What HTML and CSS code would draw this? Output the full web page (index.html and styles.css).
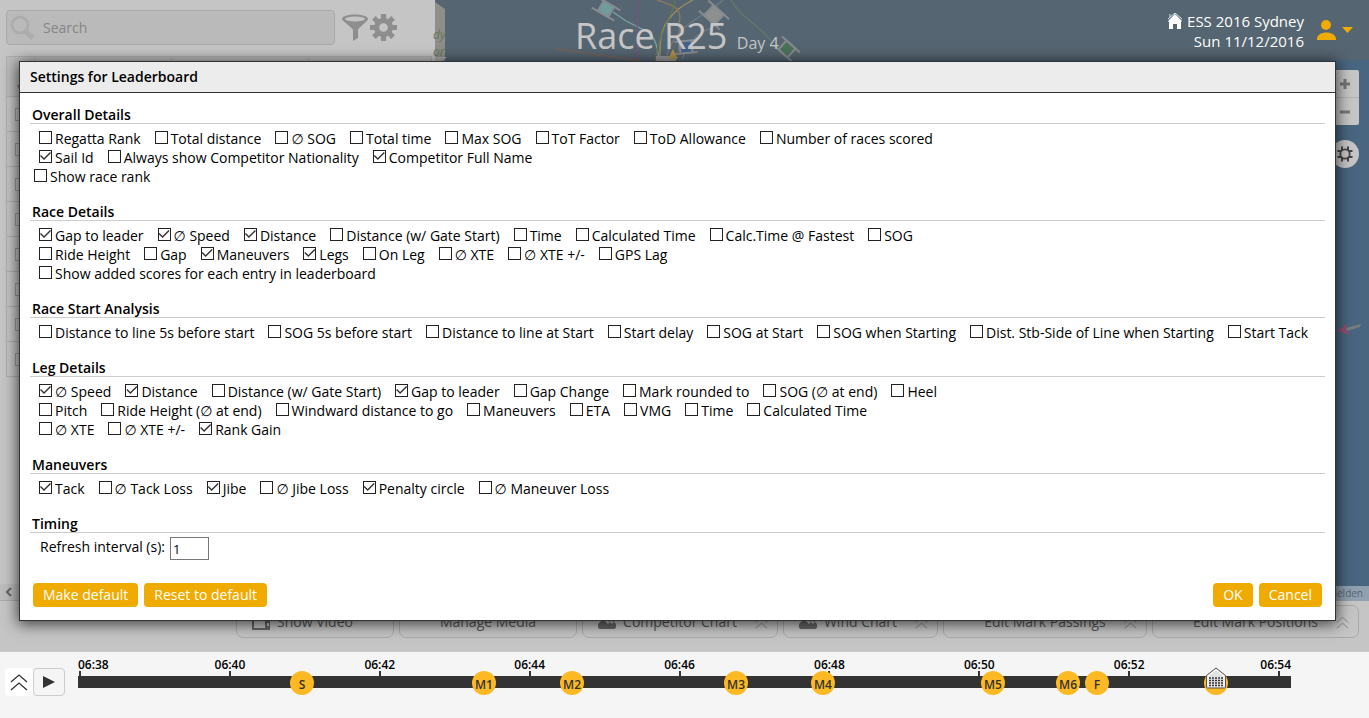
FILE: index.html
```html
<!DOCTYPE html>
<html lang="en">
<head>
<meta charset="utf-8">
<title>Race R25</title>
<link rel="stylesheet" href="styles.css">
</head>
<body>
<svg class="defs" aria-hidden="true">
  <symbol id="gear" viewBox="0 0 26 26"><path fill-rule="evenodd" d="M10.500 0h5v4.200l2 .8 3-3 3.500 3.500-3 3 .8 2h4.200v5h-4.200l-.8 2 3 3-3.500 3.500-3-3-2 .8v4.200h-5v-4.200l-2-.8-3 3-3.500-3.500 3-3-.8-2H0v-5h4.200l.8-2-3-3 3.500-3.500 3 3 2-.8zM13 8.800a4.200 4.200 0 1 0 0 8.400 4.200 4.200 0 0 0 0-8.400z"/></symbol>
  <symbol id="up" viewBox="0 0 18 18"><path d="M1 9l8-7 8 7M1 17l8-7 8 7" fill="none" stroke="currentColor" stroke-width="1.300"/></symbol>
  <symbol id="chart" viewBox="0 0 18 15"><path d="M0 12V9l4-4 3 1 3 3 2-2 2 2 2-2 2 2v3q0 2-2 2H2q-2 0-2-2zM8 4l3 3 2-2 2 2 3-2V3q0-2-2-2h-6z"/></symbol>
</svg>
<div class="workspace">
  <section class="panel">
    <div class="search">
      <label class="searchbox">
        <svg width="26" height="26" viewBox="0 0 26 26"><circle cx="10" cy="10" r="8" fill="none" stroke="currentColor" stroke-width="3"/><path d="M15 16l8 7" stroke="currentColor" stroke-width="5"/></svg>
        <input type="text" placeholder="Search" aria-label="Search">
      </label>
      <button class="icon" aria-label="Filter"><svg width="26" height="27" viewBox="0 0 26 27"><path d="M0 5c0-6 26-6 26 0 0 2-10 9-10 11v8l-5 3V16C11 14 0 7 0 5z"/><ellipse cx="13" cy="5" rx="10" ry="2.500" fill="#c5c5c5"/></svg></button>
      <button class="icon" aria-label="Settings"><svg width="27" height="27"><use href="#gear"/></svg></button>
    </div>
    <table class="entries" aria-label="Entries">
      <thead><tr><th class="pick">▾</th><th class="wide"></th><th class="wide"></th><th></th></tr></thead>
      <tbody>
        <tr><td><input type="checkbox" aria-label="Entry 1"></td><td></td><td></td><td></td></tr>
        <tr><td><input type="checkbox" aria-label="Entry 2"></td><td></td><td></td><td></td></tr>
        <tr><td><input type="checkbox" aria-label="Entry 3"></td><td></td><td></td><td></td></tr>
        <tr><td><input type="checkbox" aria-label="Entry 4"></td><td></td><td></td><td></td></tr>
        <tr><td><input type="checkbox" aria-label="Entry 5"></td><td></td><td></td><td></td></tr>
        <tr><td><input type="checkbox" aria-label="Entry 6"></td><td></td><td></td><td></td></tr>
        <tr><td><input type="checkbox" aria-label="Entry 7"></td><td></td><td></td><td></td></tr>
        <tr><td><input type="checkbox" aria-label="Entry 8"></td><td></td><td></td><td></td></tr>
      </tbody>
    </table>
    <div class="scrollbar"><svg width="7" height="10" viewBox="0 0 7 10"><path d="M6 1L2 5l4 4" fill="none" stroke="#666" stroke-width="2"/></svg></div>
  </section>
  <section class="map">
    <header class="racebar">
      <svg class="tracks" width="500" height="62" viewBox="0 0 500 62" fill="none">
        <path d="M0 2l10 7v53H0z" fill="#8e8f8a"/>
        <path d="M0 57l12 0-6 5H0z" fill="#adadad"/>
        <g stroke-width="1.300">
          <path d="M178 12l13 9 14 7c14 5 17 14 19 32" stroke="#77a5a6"/>
          <path d="M205 0c-4 20-4 40-1 60" stroke="#76557f"/>
          <path d="M258 0c-20 10-33 24-33 48v12" stroke="#a18f5c"/>
          <path d="M222 0c22 6 25 12 22 24v28" stroke="#8c7a5d"/>
          <path d="M288 0c-17 17-50 23-57 60M282 25c-18 8-27 12-35 35" stroke="#747a80"/>
          <path d="M296 0c10 18 29 25 42 43" stroke="#637b66"/>
          <path d="M121 49l87 12" stroke="#6f625f" stroke-width="2"/>
          <path d="M240 0c-3 20-16 30-20 62" stroke="#657650"/>
        </g>
        <g stroke="#858b90" stroke-width="2">
          <g transform="translate(171 9) rotate(30)"><path d="M-13-6h26M-13 6h26" /><path d="M-6-6H6V6H-6z" fill="#6f9c9d"/></g>
          <g transform="translate(279 15) rotate(42)"><path d="M-14-7h28M-14 7h28" /><path d="M-7-7H7V7H-7z" fill="#8e9090"/></g>
          <g transform="translate(352 49) rotate(42)"><path d="M-12-6h24M-12 6h24" /><path d="M-6-6H6V6H-6z" fill="#4b7158"/></g>
          <g transform="translate(251 47) rotate(-5)"><path d="M-11-6h22M-11 6h22" /><path d="M-6-6H6V6H-6z" fill="#41618e"/></g>
        </g>
        <path d="M221 56h20v5h-20z" fill="#969898"/><path d="M238 49l5 10h-10z" fill="#ae914d"/>
      </svg>
      <span class="park">dy<br>or</span>
      <h1 class="title">Race R25 <small>Day 4</small></h1>
      <div class="event">
        <svg width="14" height="16" viewBox="0 0 14 16"><path d="M0 8L7 1l7 7-1 1v7H9v-5H5v5H1V9z" fill="#fff"/><path d="M0 6l7-6 7 6M2 1v3" fill="none" stroke="#dce8ec"/></svg>
        <p>ESS 2016 Sydney<br>Sun 11/12/2016</p>
        <button class="user" aria-label="User menu"><svg width="36" height="20" viewBox="0 0 36 20"><circle cx="9" cy="5" r="5"/><path d="M0 20c-1-10 20-10 19 0zM25 7h11l-5.500 6z"/></svg></button>
      </div>
    </header>
    <div class="controls">
      <div class="zoom"><button aria-label="Zoom in"><svg width="12" height="12"><path d="M4.500 1h3v3.500H11v3H7.500V11h-3V7.500H1v-3h3.500z"/></svg></button><button aria-label="Zoom out"><svg width="12" height="12"><path d="M1 4.500h10v3H1z"/></svg></button></div>
      <button class="mapgear" aria-label="Map settings"><svg width="16" height="16" viewBox="-8 -8 16 16"><circle r="4.700" fill="none" stroke="#444" stroke-width="1.800"/><path d="M-3-7.500V-4M3-7.500V-4M-3 7.500V4M3 7.500V4M-7.500-3H-4M-7.500 3H-4M7.500-3H4M7.500 3H4" stroke="#444" stroke-width="2"/></svg></button>
    </div>
    <svg class="wind" width="24" height="14" viewBox="0 0 24 14"><path d="M9 6l15-4-1 3-13 4z" fill="#777e7d"/><path d="M0 9l12-8-4 6 6 6z" fill="#984c70"/></svg>
    <div class="credit">melden</div>
  </section>
</div>
<nav class="toolbar">
  <button class="w158"><svg class="lead" width="18" height="15" viewBox="0 0 18 15"><path fill-rule="evenodd" d="M0 0h18v15H0zM2 2v11h11V2zM15 8v3h2V8z"/></svg><span>Show Video</span></button>
  <button class="w178"><span>Manage Media</span></button>
  <button class="w196"><svg class="lead" width="18" height="15"><use href="#chart"/></svg><span>Competitor Chart</span><svg class="trail" width="13" height="13"><use href="#up"/></svg></button>
  <button class="w155"><svg class="lead" width="18" height="15"><use href="#chart"/></svg><span>Wind Chart</span><svg class="trail" width="13" height="13"><use href="#up"/></svg></button>
  <button class="w204"><span>Edit Mark Passings</span><svg class="trail" width="13" height="13"><use href="#up"/></svg></button>
  <button class="w207"><span>Edit Mark Positions</span><svg class="trail" width="13" height="13"><use href="#up"/></svg></button>
</nav>
<footer class="timebar">
  <button class="expand" aria-label="Expand"><svg width="18" height="18"><use href="#up"/></svg></button>
  <button class="play" aria-label="Play"><svg width="12" height="12"><path d="M0 0l12 6-12 6z"/></svg></button>
  <div class="timeline">
    <div class="times"><span>06:38</span><span>06:40</span><span>06:42</span><span>06:44</span><span>06:46</span><span>06:48</span><span>06:50</span><span>06:52</span><span>06:54</span></div>
    <div class="ticks"><i></i><i></i><i></i><i></i><i></i><i></i><i></i><i></i><i></i></div>
    <div class="bar">
      <span class="mark" style="left:18.470%">S</span><span class="mark" style="left:33.470%">M1</span><span class="mark" style="left:40.730%">M2</span><span class="mark" style="left:54.250%">M3</span><span class="mark" style="left:61.420%">M4</span><span class="mark" style="left:75.430%">M5</span><span class="mark" style="left:81.620%">M6</span><span class="mark" style="left:84.010%">F</span><span class="mark" style="left:93.820%"></span>
      <svg class="knob" style="left:93.820%" width="22" height="22" viewBox="0 0 22 22"><path d="M1.500 8.500L11 1l9.500 7.500V20q0 1-1 1h-17q-1 0-1-1z" fill="#e2e2e2" stroke="#555"/><path d="M3 9l8-6.500L19 9v10H3z" fill="none" stroke="#fff"/><path d="M4 11h14M4 13.500h14M4 16h14M4 18.500h14" stroke="#333" stroke-width="1.500" stroke-dasharray="2 1"/></svg>
    </div>
  </div>
</footer>

<div class="dialog" role="dialog" aria-labelledby="dlg-title">
  <h2 class="caption" id="dlg-title">Settings for Leaderboard</h2>
  <form class="body">
    <section class="group"><h3>Overall Details</h3>
      <div class="row"><label><input type="checkbox">Regatta Rank</label><label><input type="checkbox">Total distance</label><label><input type="checkbox">∅ SOG</label><label><input type="checkbox">Total time</label><label><input type="checkbox">Max SOG</label><label><input type="checkbox">ToT Factor</label><label><input type="checkbox">ToD Allowance</label><label><input type="checkbox">Number of races scored</label></div>
      <div class="row"><label><input type="checkbox" checked>Sail Id</label><label><input type="checkbox">Always show Competitor Nationality</label><label><input type="checkbox" checked>Competitor Full Name</label></div>
      <div class="row outer"><label><input type="checkbox">Show race rank</label></div>
    </section>
    <section class="group"><h3>Race Details</h3>
      <div class="row"><label><input type="checkbox" checked>Gap to leader</label><label><input type="checkbox" checked>∅ Speed</label><label><input type="checkbox" checked>Distance</label><label><input type="checkbox">Distance (w/ Gate Start)</label><label><input type="checkbox">Time</label><label><input type="checkbox">Calculated Time</label><label><input type="checkbox">Calc.Time @ Fastest</label><label><input type="checkbox">SOG</label></div>
      <div class="row"><label><input type="checkbox">Ride Height</label><label><input type="checkbox">Gap</label><label><input type="checkbox" checked>Maneuvers</label><label><input type="checkbox" checked>Legs</label><label><input type="checkbox">On Leg</label><label><input type="checkbox">∅ XTE</label><label><input type="checkbox">∅ XTE +/-</label><label><input type="checkbox">GPS Lag</label></div>
      <div class="row"><label><input type="checkbox">Show added scores for each entry in leaderboard</label></div>
    </section>
    <section class="group"><h3>Race Start Analysis</h3>
      <div class="row"><label><input type="checkbox">Distance to line 5s before start</label><label><input type="checkbox">SOG 5s before start</label><label><input type="checkbox">Distance to line at Start</label><label><input type="checkbox">Start delay</label><label><input type="checkbox">SOG at Start</label><label><input type="checkbox">SOG when Starting</label><label><input type="checkbox">Dist. Stb-Side of Line when Starting</label><label><input type="checkbox">Start Tack</label></div>
    </section>
    <section class="group"><h3>Leg Details</h3>
      <div class="row"><label><input type="checkbox" checked>∅ Speed</label><label><input type="checkbox" checked>Distance</label><label><input type="checkbox">Distance (w/ Gate Start)</label><label><input type="checkbox" checked>Gap to leader</label><label><input type="checkbox">Gap Change</label><label><input type="checkbox">Mark rounded to</label><label><input type="checkbox">SOG (∅ at end)</label><label><input type="checkbox">Heel</label></div>
      <div class="row"><label><input type="checkbox">Pitch</label><label><input type="checkbox">Ride Height (∅ at end)</label><label><input type="checkbox">Windward distance to go</label><label><input type="checkbox">Maneuvers</label><label><input type="checkbox">ETA</label><label><input type="checkbox">VMG</label><label><input type="checkbox">Time</label><label><input type="checkbox">Calculated Time</label></div>
      <div class="row"><label><input type="checkbox">∅ XTE</label><label><input type="checkbox">∅ XTE +/-</label><label><input type="checkbox" checked>Rank Gain</label></div>
    </section>
    <section class="group"><h3>Maneuvers</h3>
      <div class="row"><label><input type="checkbox" checked>Tack</label><label><input type="checkbox">∅ Tack Loss</label><label><input type="checkbox" checked>Jibe</label><label><input type="checkbox">∅ Jibe Loss</label><label><input type="checkbox" checked>Penalty circle</label><label><input type="checkbox">∅ Maneuver Loss</label></div>
    </section>
    <section class="group tight"><h3>Timing</h3>
      <div class="timing"><label for="refresh">Refresh interval (s):</label><input id="refresh" type="text" value="1"></div>
    </section>
    <div class="actions"><button type="button">Make default</button><button type="button">Reset to default</button><button type="button" class="ok">OK</button><button type="button">Cancel</button></div>
  </form>
</div>
</body>
</html>
```
FILE: styles.css
```css
* { box-sizing: border-box; }
html, body { height: 100%; margin: 0; }
body { display: flex; flex-direction: column; overflow: hidden; background: #c5c5c5; color: #000; font: 14px/19px "Open Sans", "DejaVu Sans", sans-serif; }
button, input { font: inherit; }
button { margin: 0; padding: 0; border: 0; background: none; }
h1, h2, h3, p { margin: 0; font-weight: 400; }
svg { display: block; flex: none; }
.defs { position: absolute; width: 0; height: 0; }

.workspace { flex: 1; display: flex; min-height: 0; }
.panel { width: 435px; display: flex; flex-direction: column; }
.search { display: flex; align-items: center; gap: 2px; padding: 10px 6px 11px; }
.searchbox { display: flex; align-items: center; width: 329px; height: 35px; margin-right: 5px; padding: 0 3px; gap: 7px; border: 1px solid #a9a9a9; border-radius: 4px; background: #bababa; color: #adadad; }
.searchbox input { flex: 1; min-width: 0; padding: 0; border: 0; background: none; outline: 0; }
.searchbox input::placeholder { color: #858585; opacity: 1; }
.icon { fill: #8e8e8e; }
.entries { width: 426px; margin-left: 6px; border-collapse: collapse; table-layout: fixed; }
.entries th, .entries td { height: 35px; padding: 0; border: 1px solid #aeaeae; }
.entries th { height: 40px; background: #bdbdbd; }
.entries .pick { width: 28px; vertical-align: bottom; text-align: center; color: #777; }
.entries .wide { width: 137px; }
.entries input { display: block; appearance: none; width: 13px; height: 13px; margin: 0 0 0 8px; border: 1px solid #999; }
.scrollbar { display: flex; align-items: center; height: 17px; margin-top: auto; padding-left: 5px; background: #bcbcbc; border-bottom: 1px solid #aaa; }

.map { position: relative; flex: 1; display: flex; flex-direction: column; background: #48667f; }
.racebar { position: relative; display: flex; height: 60px; background: #556571; color: #fff; }
.tracks { position: absolute; left: 0; top: 0; }
.park { position: absolute; left: -2px; top: 26px; color: #647956; font-size: 12px; line-height: 17px; font-style: italic; }
.title { position: relative; padding-left: 140px; color: #c6c6c6; font-size: 36px; line-height: 72px; white-space: nowrap; }
.title small { font-size: 16px; }
.event { position: relative; display: flex; align-items: flex-start; margin-left: auto; padding: 11px 16px 0 0; gap: 5px; font-size: 15px; line-height: 20px; text-align: right; }
.event > svg { margin-top: 2px; }
.user { margin: 9px 0 0 8px; fill: #f0ab00; }
.controls { display: flex; flex-direction: column; align-items: flex-end; gap: 15px; padding: 10px 10px 0 0; }
.zoom { display: flex; flex-direction: column; width: 28px; border-radius: 2px; background: #c6c6c6; fill: #777; }
.zoom button { display: grid; place-items: center; height: 27px; }
.zoom button + button { height: 28px; border-top: 1px solid #b2b2b2; }
.mapgear { display: grid; place-items: center; width: 28px; height: 28px; border-radius: 50%; background: #c6c6c6; }
.wind { position: absolute; right: 8px; top: 322px; }
.credit { align-self: flex-end; margin-top: auto; padding: 0 6px 0 8px; background: #91a0ae; color: #536575; font-size: 10px; line-height: 15px; }

.toolbar { display: flex; justify-content: flex-end; gap: 5px; padding: 4px 10px 13px; border-bottom: 1px solid #ccc; }
.toolbar button { position: relative; height: 33px; border: 1px solid #a9a9a9; border-radius: 7px; color: #555; fill: #666; }
.toolbar .lead { position: absolute; left: 15px; top: 9px; }
.toolbar .trail { position: absolute; right: 9px; top: 10px; color: #888; }
.w158 { width: 158px; }
.w178 { width: 178px; }
.w196 { width: 196px; }
.w155 { width: 155px; }
.w204 { width: 204px; }
.w207 { width: 207px; }

.timebar { display: flex; height: 66px; padding: 4px 78px 0 5px; background: #f5f5f5; }
.expand, .play { display: grid; place-items: center; height: 28px; margin-top: 12px; border-radius: 4px; }
.expand { width: 28px; background: #fff; color: #333; }
.play { width: 32px; border: 1px solid #ccc; fill: #333; }
.timeline { flex: 1; margin-left: 13px; }
.times, .ticks { display: flex; justify-content: space-between; }
.times { height: 15px; font-size: 12px; line-height: 17px; font-weight: 600; }
.times span { display: flex; flex: none; justify-content: center; width: 2px; }
.times span:first-child { justify-content: flex-start; width: 3px; }
.times span:last-child { justify-content: flex-end; width: 13px; }
.ticks { height: 5px; padding: 0 11px 0 1px; }
.ticks i { width: 2px; background: #333; }
.bar { position: relative; height: 12px; background: #333; }
.mark { position: absolute; top: -5px; width: 24px; height: 24px; margin-left: -12px; border-radius: 50%; background: #fdb924; color: #333; font-size: 12px; line-height: 27px; font-weight: 600; text-align: center; }
.knob { position: absolute; top: -9px; margin-left: -11px; }

.dialog { position: absolute; left: 20px; right: 34px; top: 62px; outline: 1px solid #333; background: #fff; box-shadow: 0 2px 14px 2px rgba(0, 0, 0, .7); }
.caption { padding: 5px 10px 6px; border-bottom: 1px solid #333; background: #ececec; font-size: 14px; line-height: 19px; font-weight: 600; }
.body { padding: 12px 10px 13px; }
.group { margin-bottom: 15px; }
.group h3 { margin-bottom: 6px; padding: 2px 2px 0; border-bottom: 1px solid #ccc; font-size: 14px; line-height: 16px; font-weight: 600; }
.group.tight h3 { margin-bottom: 4px; }
.row { display: flex; flex-wrap: wrap; gap: 0 14px; padding-left: 9px; }
.outer { padding-left: 4px; }
.row label { display: flex; gap: 3px; height: 19px; line-height: 17px; white-space: nowrap; }
.row input { appearance: none; flex: none; width: 13px; height: 13px; margin: 1px 0 0; border: 1px solid #222; background: #fff; }
.row input:checked::before { content: ""; display: block; width: 11px; height: 11px; background: #333; clip-path: polygon(0 5px, 1px 4px, 4px 7px, 10px 1px, 11px 2px, 4px 9px); }
.timing { display: flex; gap: 5px; padding-left: 10px; }
.timing input { width: 39px; height: 23px; padding: 0 2px; border: 1px solid #777; font-size: 13px; }
.actions { display: flex; gap: 6px; padding: 8px 3px 0; }
.actions button { height: 24px; padding: 0 10px 1px; border-radius: 4px; background: #f0ab00; color: #fff; }
.actions .ok { margin-left: auto; }
```
